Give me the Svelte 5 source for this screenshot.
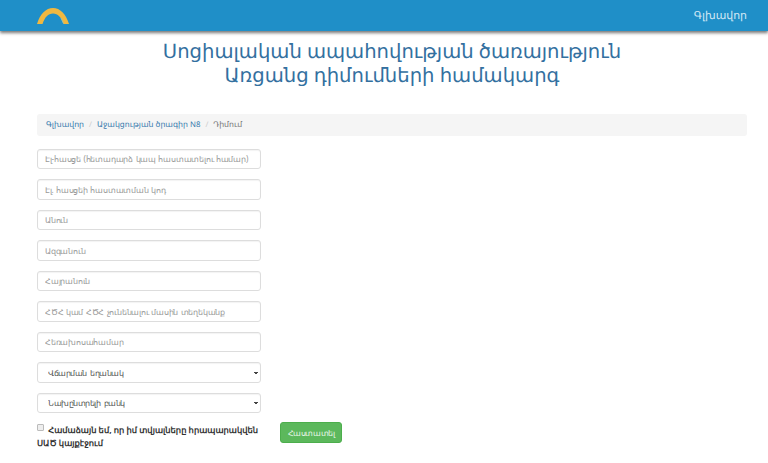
<script>
  const fields = [
    'Էլ-հասցե (հետադարձ կապ հաստատելու համար)',
    'Էլ. հասցեի հաստատման կոդ',
    'Անուն',
    'Ազգանուն',
    'Հայրանուն',
    'ՀԾՀ կամ ՀԾՀ չունենալու մասին տեղեկանք',
    'Հեռախոսահամար'
  ];
  const selects = ['Վճարման եղանակ', 'Նախընտրելի բանկ'];
</script>

<header class="topbar">
  <svg class="logo" width="32" height="16" viewBox="0 0 32 16" aria-hidden="true">
    <path d="M0 16 C3 6 9 0 16 0 C23 0 29 6 32 16 L26.5 16 C24 9 21 5.5 16 5.5 C11 5.5 8 9 5.5 16 Z" fill="#f0b840" />
    <path d="M24 10 L26.5 15.5" stroke="#9fbfa8" stroke-width="1" />
  </svg>
  <a class="navlink" href="#home">Գլխավոր</a>
</header>

<h1>Սոցիալական ապահովության ծառայություն<br />Առցանց դիմումների համակարգ</h1>

<nav class="crumbs">
  <a href="#home">Գլխավոր</a><span class="sep">/</span>
  <a href="#prog">Աջակցության ծրագիր N8</a><span class="sep">/</span>
  <span class="cur">Դիմում</span>
</nav>

<form class="form">
  <div class="fields">
    {#each fields as f}
      <input type="text" placeholder={f} />
    {/each}
    {#each selects as s}
      <select><option>{s}</option></select>
    {/each}
  </div>
  <div class="bottom">
    <label class="agree">
      <input type="checkbox" />
      Համաձայն եմ, որ իմ տվյալները հրապարակվեն ՍԱԾ կայքէջում
    </label>
    <button type="button">Հաստատել</button>
  </div>
</form>

<style>
  :global(body) {
    margin: 0;
    background: #fff;
    font-family: "Noto Sans", sans-serif;
    text-rendering: geometricPrecision;
    overflow: hidden;
  }
  .topbar {
    height: 31px;
    background: #1f8fc8;
    box-shadow: 0 2px 3px rgba(60, 60, 60, 0.7);
    display: flex;
    align-items: center;
    justify-content: space-between;
    padding: 0 21px 0 37px;
  }
  .logo {
    margin-top: 1px;
  }
  .navlink {
    color: #d5e9f5;
    font-size: 10.9px;
    text-decoration: none;
  }
  h1 {
    margin: 8px 0 0;
    width: 784px;
    text-align: center;
    color: #33709f;
    font-size: 19.6px;
    font-weight: 400;
    line-height: 24px;
  }
  .crumbs {
    margin: 27px 21px 0 37px;
    height: 22px;
    background: #f5f5f5;
    border-radius: 3px;
    padding: 0 9px;
    display: flex;
    align-items: center;
    font-size: 7.8px;
    color: #777;
  }
  .crumbs a {
    color: #3a7cae;
    text-decoration: none;
  }
  .sep {
    color: #ccc;
    margin: 0 5px;
  }
  .form {
    margin: 12.5px 0 0 37px;
  }
  .fields {
    width: 224px;
    display: grid;
    gap: 10px;
  }
  input[type="text"],
  select {
    box-sizing: border-box;
    width: 224px;
    height: 20.5px;
    margin: 0;
    border: 1px solid #ddd;
    border-radius: 3px;
    background-color: #fff;
    box-shadow: inset 0 1px 1px rgba(0, 0, 0, 0.05);
    font-family: inherit;
    font-size: 8px;
    letter-spacing: -0.2px;
    word-spacing: 0.6px;
    padding: 0 7px;
    color: #555;
  }
  select {
    appearance: none;
    padding-left: 10px;
    letter-spacing: -0.5px;
    word-spacing: 2px;
    background-image:
      linear-gradient(45deg, transparent 50%, #444 50%),
      linear-gradient(-45deg, transparent 50%, #444 50%);
    background-size: 2px 3px, 2px 3px;
    background-position: 215.5px 8.5px, 217.5px 8.5px;
    background-repeat: no-repeat;
  }
  input::placeholder {
    color: #999;
    opacity: 1;
  }
  .bottom {
    display: flex;
    align-items: flex-start;
    margin-top: 8.5px;
  }
  .agree {
    width: 224px;
    padding-top: 2px;
    font-size: 8.35px;
    line-height: 13px;
    font-weight: 700;
    color: #333;
  }
  .agree input {
    appearance: none;
    box-sizing: border-box;
    margin: 0 2px 0 0;
    width: 7px;
    height: 7px;
    border: 1px solid #bbb;
    border-radius: 1px;
    background: #eee;
    vertical-align: 1.5px;
  }
  button {
    margin: 0 0 0 19px;
    width: 62px;
    height: 21px;
    border: 1px solid #4cae4c;
    border-radius: 3px;
    background: #5cb85c;
    color: #e6f5e6;
    font-family: inherit;
    font-size: 8px;
    letter-spacing: -0.4px;
    padding: 0;
  }
</style>
